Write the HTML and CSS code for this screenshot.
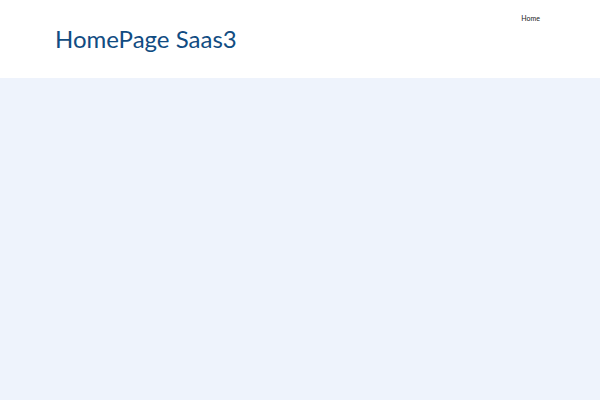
FILE: index.html
```html
<!DOCTYPE html>
<html>
<head>
<meta charset="utf-8">
<link rel="stylesheet" href="styles.css">
</head>
<body>
<header class="site-header">
  <div class="header-inner">
    <h1 class="site-title">HomePage Saas3</h1>
    <nav class="main-nav"><a class="nav-link" href="#">Home</a></nav>
  </div>
</header>
<main class="content"></main>
</body>
</html>
```
FILE: styles.css
```css
html, body {
  margin: 0;
  padding: 0;
  height: 100%;
}
body {
  font-family: Lato, "Open Sans", sans-serif;
  background: #eef3fc;
  display: flex;
  flex-direction: column;
}
.site-header {
  background: #ffffff;
  height: 78px;
  flex: none;
}
.header-inner {
  display: flex;
  justify-content: space-between;
  align-items: flex-start;
  padding: 0 60px 0 55px;
}
.site-title {
  margin: 25px 0 0 0;
  font-size: 24px;
  font-weight: 400;
  color: #114c82;
  line-height: 28px;
}
.main-nav {
  margin-top: 13px;
  font-size: 7px;
  line-height: 10px;
}
.nav-link {
  font-size: 7px;
  color: #222222;
  text-decoration: none;
}
.content {
  flex: 1;
}
```
